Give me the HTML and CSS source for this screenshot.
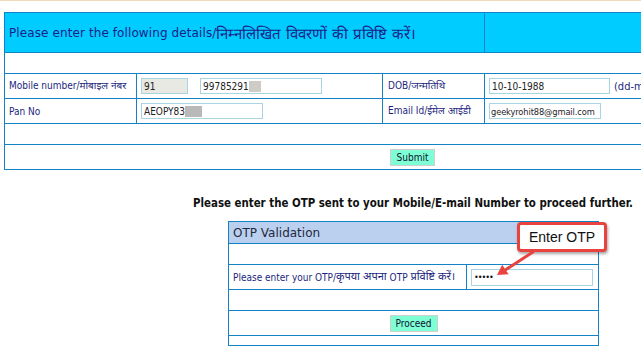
FILE: index.html
```html
<!DOCTYPE html>
<html lang="en">
<head>
<meta charset="utf-8">
<title>OTP Validation</title>
<link rel="stylesheet" href="styles.css">
</head>
<body>
<div class="topline"></div>
<div class="page">
  <div class="main">
    <div class="row hdr">
      <div class="hdr-title">Please enter the following details/<span class="hi-lg">निम्नलिखित विवरणों की प्रविष्टि करें।</span></div>
      <div class="hdr-side"></div>
    </div>
    <div class="row empty"></div>
    <div class="row form">
      <div class="cell lbl">Mobile number/मोबाइल नंबर</div>
      <div class="cell val">
        <span class="inp code">91</span>
        <span class="inp mob">99785291<span class="mask m1"></span></span>
      </div>
      <div class="cell lbl lbl2">DOB/जन्मतिथि</div>
      <div class="cell val">
        <span class="inp dob">10-10-1988</span>
        <span class="hint">(dd-m</span>
      </div>
    </div>
    <div class="row form">
      <div class="cell lbl">Pan No</div>
      <div class="cell val">
        <span class="inp pan">AEOPY83<span class="mask m2"></span></span>
      </div>
      <div class="cell lbl lbl2">Email Id/ईमेल आईडी</div>
      <div class="cell val">
        <span class="inp mail">geekyrohit88@gmail.com</span>
      </div>
    </div>
    <div class="row empty"></div>
    <div class="row btnrow">
      <button class="btn submit" type="button">Submit</button>
    </div>
  </div>

  <p class="note">Please enter the OTP sent to your Mobile/E-mail Number to proceed further.</p>

  <div class="otp">
    <div class="orow ohdr">OTP Validation</div>
    <div class="orow oempty"></div>
    <div class="orow oform">
      <div class="ocell olbl">Please enter your OTP/<span class="hi-sm">कृपया अपना</span>&nbsp;OTP&nbsp;<span class="hi-sm">प्रविष्टि करें।</span></div>
      <div class="ocell oval"><span class="inp otpin">•••••</span></div>
    </div>
    <div class="orow oempty"></div>
    <div class="orow obtn">
      <button class="btn proceed" type="button">Proceed</button>
    </div>
    <div class="orow olast"></div>
  </div>

  <div class="callout">Enter OTP</div>
  <svg class="arrow" width="60" height="40" viewBox="490 245 60 40" xmlns="http://www.w3.org/2000/svg">
    <line x1="533" y1="252" x2="506" y2="269.5" stroke="#e8433f" stroke-width="3" stroke-linecap="round"/>
    <polygon points="497,275 508.6,274.2 502.2,264.8" fill="#e8433f"/>
  </svg>
</div>
</body>
</html>
```

FILE: styles.css
```css
html, body {
  margin: 0;
  padding: 0;
  background: #ffffff;
}
body {
  overflow: hidden;
  font-family: "DejaVu Sans Condensed", "DejaVu Sans", "Noto Sans Devanagari", "Lohit Devanagari", sans-serif;
  color: #1c1f7e;
}
.topline {
  height: 1px;
  background: #f6d8bb;
}
.page {
  position: relative;
  width: 824px;
  padding-top: 11px;
}
.main {
  margin-left: 4px;
  width: 817px;
  box-sizing: border-box;
  border: 1px solid #1383c6;
}
.row {
  box-sizing: border-box;
}
.row + .row {
  border-top: 1px solid #1383c6;
}
.hdr {
  display: grid;
  grid-template-columns: 479px 1fr;
  height: 39px;
  background: #00ccff;
}
.hdr-title {
  display: flex;
  align-items: center;
  padding-left: 4px;
  font-family: "DejaVu Sans", sans-serif;
  font-size: 12px;
  letter-spacing: 0.1px;
  color: #1a2288;
  white-space: nowrap;
}
.hi-lg {
  font-size: 15px;
}
.hi-sm {
  font-size: 11px;
}
.hdr-side {
  border-left: 1px solid #1383c6;
}
.row.empty {
  height: 21px;
}
.row.form {
  display: grid;
  grid-template-columns: 131px 246px 102px 1fr;
  height: 25px;
}
.cell {
  display: flex;
  align-items: center;
  box-sizing: border-box;
  font-size: 10px;
  white-space: nowrap;
}
.cell + .cell {
  border-left: 1px solid #1383c6;
}
.lbl {
  padding-left: 4px;
}
.lbl2 {
  padding-left: 5px;
}
.val {
  padding-left: 4px;
  gap: 12px;
}
.inp {
  display: inline-flex;
  align-items: center;
  box-sizing: border-box;
  height: 16px;
  padding-left: 2px;
  border: 1px solid #a9d5e3;
  background: #ffffff;
  color: #222222;
  font-size: 10px;
  white-space: nowrap;
  overflow: hidden;
}
.code {
  width: 47px;
  background: #e9e9e4;
}
.mob {
  width: 122px;
}
.pan {
  width: 122px;
}
.dob {
  width: 121px;
}
.mail {
  width: 112px;
  padding-left: 1px;
  font-size: 9.2px;
  letter-spacing: -0.1px;
}
.mask {
  display: inline-block;
  height: 11px;
}
.m1 {
  width: 12px;
  background: #cfccc8;
}
.m2 {
  width: 17px;
  background: #b9b9b9;
}
.hint {
  margin-left: -8px;
  font-size: 11px;
  color: #1c1f7e;
}
.row.btnrow {
  display: flex;
  align-items: center;
  justify-content: center;
  height: 25px;
}
.btn {
  margin: 0;
  padding: 0;
  box-sizing: border-box;
  height: 17px;
  border: 1px solid #cfcfcf;
  background: #7fffd4;
  color: #111133;
  font-family: "DejaVu Sans Condensed", "DejaVu Sans", sans-serif;
  font-size: 10px;
}
.submit {
  width: 45px;
}
.proceed {
  width: 48px;
}
.note {
  margin: 26px 0 0 0;
  padding-left: 2px;
  text-align: center;
  font-family: "DejaVu Sans Condensed", "DejaVu Sans", sans-serif;
  font-weight: bold;
  font-size: 11.4px;
  line-height: 14px;
  color: #111111;
}
.otp {
  margin: 11px 0 0 228px;
  width: 371px;
  box-sizing: border-box;
  border: 1px solid #1383c6;
}
.orow {
  box-sizing: border-box;
}
.orow + .orow {
  border-top: 1px solid #1383c6;
}
.ohdr {
  display: flex;
  align-items: center;
  height: 21px;
  padding-left: 4px;
  background: #bad0ee;
  font-family: "DejaVu Sans", sans-serif;
  font-size: 12px;
  color: #232840;
}
.oempty {
  height: 21px;
}
.oform {
  display: grid;
  grid-template-columns: 237px 1fr;
  height: 25px;
}
.ocell {
  display: flex;
  align-items: center;
  box-sizing: border-box;
  font-size: 10px;
  white-space: nowrap;
}
.ocell + .ocell {
  border-left: 1px solid #1383c6;
}
.olbl {
  padding-left: 4px;
}
.oval {
  padding-left: 4px;
}
.otpin {
  width: 122px;
  height: 17px;
  font-size: 9px;
  letter-spacing: -1px;
  color: #111111;
}
.obtn {
  display: flex;
  align-items: center;
  justify-content: center;
  height: 25px;
}
.olast {
  height: 10px;
}
.callout {
  position: absolute;
  left: 517px;
  top: 221px;
  width: 90px;
  height: 30px;
  box-sizing: border-box;
  display: flex;
  align-items: center;
  justify-content: center;
  border: 3px solid #e8433f;
  border-radius: 4px;
  background: #ffffff;
  box-shadow: 1px 2px 3px rgba(0, 0, 0, 0.35);
  font-family: "Liberation Sans", Arial, sans-serif;
  font-size: 14px;
  color: #111111;
}
.arrow {
  position: absolute;
  left: 490px;
  top: 244px;
}
```
